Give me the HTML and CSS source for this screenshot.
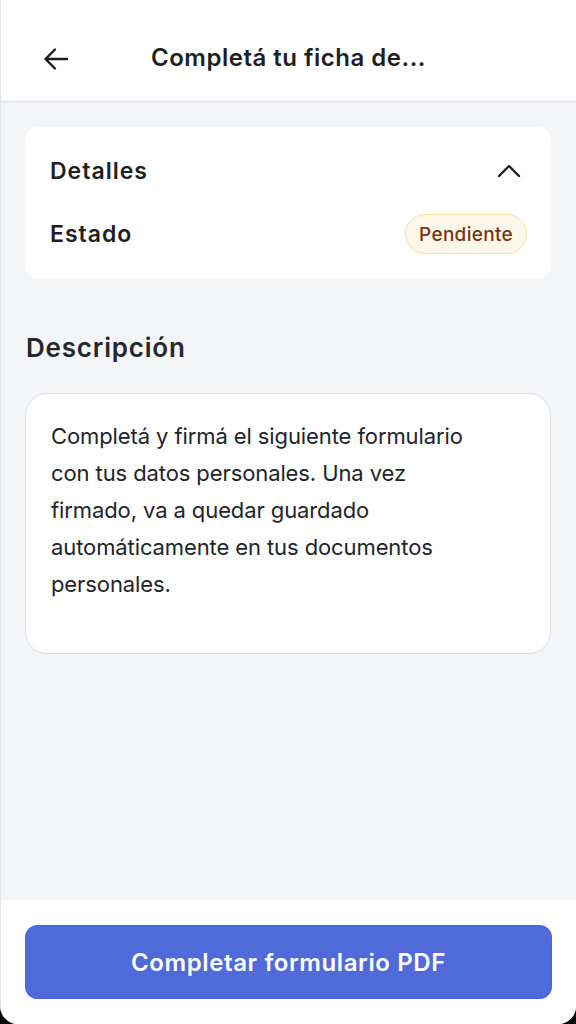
FILE: index.html
```html
<!DOCTYPE html>
<html lang="es">
<head>
<meta charset="utf-8">
<title>Completá tu ficha de...</title>
<link rel="stylesheet" href="styles.css">
</head>
<body>
<div class="app">
  <header class="topbar">
    <button class="back" aria-label="Volver">
      <svg width="28" height="28" viewBox="0 0 28 28" fill="none" stroke="#1c1d21" stroke-width="2.4" stroke-linecap="round" stroke-linejoin="round"><path d="M25 14H3.5M13 4.5L3.5 14l9.5 9.5"/></svg>
    </button>
    <h1 class="title">Completá tu ficha de...</h1>
  </header>
  <main class="content">
    <section class="card">
      <div class="row">
        <span class="label">Detalles</span>
        <svg class="chev" width="24" height="16" viewBox="0 0 24 16" fill="none" stroke="#1c1d21" stroke-width="2.4" stroke-linecap="round" stroke-linejoin="round"><path d="M2 13L12 3l10 10"/></svg>
      </div>
      <div class="row">
        <span class="label">Estado</span>
        <span class="badge">Pendiente</span>
      </div>
    </section>
    <h2 class="heading">Descripción</h2>
    <div class="desc">Completá y firmá el siguiente formulario con tus datos personales. Una vez firmado, va a quedar guardado automáticamente en tus documentos personales.</div>
  </main>
  <footer class="footer">
    <button class="cta">Completar formulario PDF</button>
  </footer>
</div>
</body>
</html>
```
FILE: styles.css
```css
html, body { margin: 0; padding: 0; background: #000; }
* { box-sizing: border-box; }
.app {
  width: 576px;
  height: 1024px;
  display: flex;
  flex-direction: column;
  background: #f4f5f7;
  border-radius: 0 0 18px 18px;
  overflow: hidden;
  font-family: Inter, "Noto Sans", sans-serif;
  color: #1e1f23;
  border-left: 1px solid #e6e7ea;
}
.topbar {
  height: 102px;
  flex: none;
  background: #fff;
  border-bottom: 1.5px solid #dcdee2;
  display: flex;
  align-items: center;
  position: relative;
}
.back {
  position: absolute;
  left: 40px;
  top: 44px;
  width: 30px;
  height: 30px;
  padding: 0;
  border: 0;
  background: none;
  display: flex;
  align-items: center;
  justify-content: center;
}
.title {
  margin: 0 auto;
  font-size: 24px;
  font-weight: 600;
  letter-spacing: 0.5px;
  color: #1e1f23;
  padding-top: 13px;
}
.content {
  flex: 1;
  padding: 25px 25px 0 24px;
}
.card {
  background: #fff;
  border-radius: 14px;
  padding: 25px 24px 25px 25px;
  display: flex;
  flex-direction: column;
  gap: 24px;
}
.row {
  display: flex;
  align-items: center;
  justify-content: space-between;
}
.row:first-child { height: 38px; }
.row:last-child { height: 40px; }
.label {
  font-size: 23px;
  font-weight: 600;
  letter-spacing: 1px;
  color: #1e1f23;
}
.chev { margin-right: 6px; }
.badge {
  height: 40px;
  padding: 0 13px;
  border-radius: 20px;
  background: #fdf8e9;
  border: 1.5px solid #f7e4a3;
  color: #7a3411;
  font-size: 19px;
  font-weight: 500;
  letter-spacing: 0.3px;
  display: flex;
  align-items: center;
}
.heading {
  margin: 50px 0 26px 1px;
  font-size: 26px;
  font-weight: 600;
  line-height: 38px;
  letter-spacing: 0.8px;
  color: #26272b;
}
.desc {
  background: #fff;
  border: 1.5px solid #dcdde1;
  border-radius: 22px;
  padding: 24px 66px 50px 25px;
  font-size: 22px;
  line-height: 37px;
  color: #232428;
  letter-spacing: -0.1px;
}
.footer {
  flex: none;
  height: 124px;
  background: #fff;
  padding: 25px 24px 0 24px;
}
.cta {
  width: 100%;
  height: 74px;
  border: 1px solid #4a63dc;
  border-radius: 12px;
  background: #506ad9;
  color: #fff;
  font-family: Inter, "Noto Sans", sans-serif;
  font-size: 24px;
  font-weight: 600;
  letter-spacing: 0.6px;
}
```
